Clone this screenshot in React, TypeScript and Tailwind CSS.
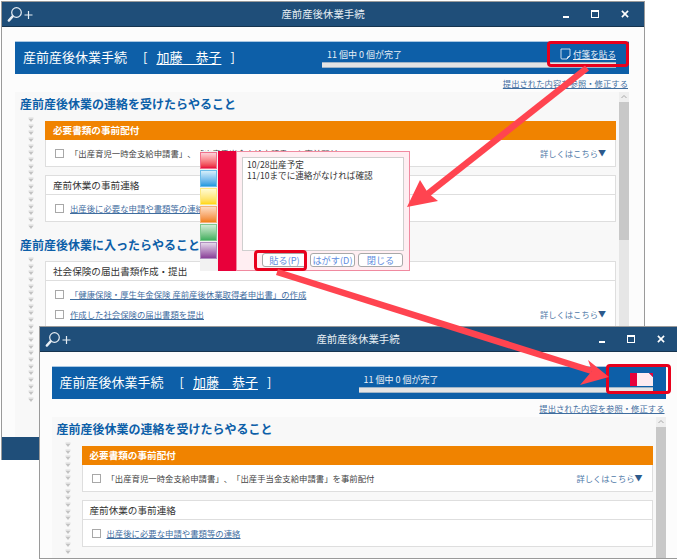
import React from "react";

const FONT = "font-['Noto_Sans_CJK_JP','Liberation_Sans',sans-serif]";

function Chevrons({ count }: { count: number }) {
  return (
    <div className="flex w-[30px] shrink-0 flex-col items-center pl-[2px]">
      {Array.from({ length: count }).map((_, i) => (
        <svg key={i} width="6" height="6.67" viewBox="0 0 6 6.67" className="block">
          <rect x="0.5" y="0.6" width="5" height="0.8" fill="#d6d6d6" />
          <path d="M0.5 1.8 H5.5 L3 5 Z" fill="#c2c2c2" />
        </svg>
      ))}
    </div>
  );
}

function Check() {
  return <span className="h-[9px] w-[9px] shrink-0 border border-[#a8a8a8] bg-white" />;
}

function Detail() {
  return (
    <span className="ml-auto flex items-center text-[8.3px] text-[#4f79a8]">
      詳しくはこちら<span className="text-[8px] text-[#2c5a8c]">▼</span>
    </span>
  );
}

function TitleBar({ front }: { front: boolean }) {
  return (
    <div className="relative flex h-[25px] shrink-0 items-center border-b border-[#16344f] bg-[#1f4e79] text-white">
      <svg width="28" height="18" viewBox="0 0 28 18" className="ml-[5px] mt-[2px]" fill="none" stroke="#e8eef4">
        <circle cx="9.5" cy="6.5" r="4.8" strokeWidth="1.2" />
        <path d="M5.6 10.4 L1.8 14.6" strokeWidth="2.4" strokeLinecap="round" />
        <path d="M17.5 9 H25.5 M21.5 5 V13" strokeWidth="1.2" />
      </svg>
      <span className={`absolute left-0 text-center text-[10.4px] text-[#e6edf3] ${front ? "right-[4px]" : "right-0"}`}>
        産前産後休業手続
      </span>
      <div className="ml-auto flex items-center gap-[22px] pr-[15px]">
        <span className="mt-[5px] h-[2px] w-[6px] bg-white" />
        <span className="h-[8px] w-[8px] border border-white border-t-2" />
        <svg width="8" height="8" viewBox="0 0 9 9" stroke="white" strokeWidth="1.8">
          <path d="M1 1 L8 8 M8 1 L1 8" />
        </svg>
      </div>
    </div>
  );
}

function Card({ children }: { children: React.ReactNode }) {
  return <div className="w-[571px] border border-[#dedede] bg-white">{children}</div>;
}

function CardHead({ children }: { children: React.ReactNode }) {
  return (
    <div className="flex h-[19px] items-center border-b border-[#dedede] pl-[7px] text-[9.6px] text-[#333]">{children}</div>
  );
}

function WindowContent({ pasted }: { pasted: boolean }) {
  return (
    <div className="flex min-h-0 flex-1 flex-col bg-[#fcfcfc] [text-spacing-trim:space-all]">
      <div className="mt-[14px] flex h-[33px] w-[614px] shrink-0 border-t border-[#a9c7e2] bg-[#0d5fa8] text-white">
        <div className="flex w-[307px] shrink-0 items-center pb-[3px] pl-[8px] text-[13px]">
          <span>産前産後休業手続</span>
          <span className="ml-[16px]">[</span>
          <span className="ml-[9px] underline underline-offset-2">加藤　恭子</span>
          <span className="ml-[9px]">]</span>
        </div>
        <div className="relative w-[294px] shrink-0">
          <div className="pl-[5px] pt-[7px] text-[9px] leading-[12px] text-[#e8eff6]">11 個中 0 個が完了</div>
          <div className="absolute left-0 right-0 top-[20px] h-[6px] border-y border-[#9fb4c8] bg-[#e4e4e4]" />
          {pasted ? (
            <svg className="absolute right-0 top-[6px]" width="23" height="13" viewBox="0 0 23 13">
              <rect x="0" y="0" width="7" height="13" fill="#e8003a" />
              <path d="M7 0 H19 L23 4 V13 H7 Z" fill="#fdebf0" />
              <path d="M19 0 H23 V4 Z" fill="#e8003a" />
            </svg>
          ) : (
            <div className="absolute right-0 top-[6px] flex items-center gap-[2px] text-[8.6px] leading-[12px] text-[#e8eff6]">
              <svg width="11" height="12" viewBox="0 0 11 12" fill="none" stroke="#dfe9f3" strokeWidth="0.9">
                <path d="M1 1 H10 V8 L7 11 H2 Q1 11 1 10 Z" />
                <path d="M7 11 Q7 8 10 8" />
              </svg>
              <span className="underline">付箋を貼る</span>
            </div>
          )}
        </div>
      </div>
      <div className="flex h-[18px] w-[614px] shrink-0 items-center justify-end pr-[1px] text-[8.35px] text-[#3f6d9f] underline">
        提出された内容を参照・修正する
      </div>
      <div className="flex min-h-0 w-[614px] flex-1 overflow-hidden bg-[#f8f8f8]">
        <div className="min-w-0 flex-1 pt-[3px]">
          <h2 className="pl-[5px] text-[12px] font-bold leading-[17px] text-[#0d5fa8]">産前産後休業の連絡を受けたらやること</h2>
          <div className="mt-[5px] flex">
            <Chevrons count={17} />
            <div className="flex flex-col gap-[8px] pt-[4px]">
              <div className="w-[571px] border border-[#dedede] bg-white">
                <div className="-mx-px -mt-px flex h-[19px] items-center bg-[#f08300] pl-[8px] text-[9.6px] font-bold text-[#fff]">
                  必要書類の事前配付
                </div>
                <div className="flex h-[26px] items-center pl-[9px] pr-[9px] text-[8.4px] text-[#444]">
                  <Check />
                  <span className="ml-[6px]">「出産育児一時金支給申請書」、「出産手当金支給申請書」を事前配付</span>
                  <Detail />
                </div>
              </div>
              <Card>
                <CardHead>産前休業の事前連絡</CardHead>
                <div className="flex h-[26px] items-center pl-[9px] text-[8.4px] text-[#3f6d9f]">
                  <Check />
                  <span className="ml-[6px] underline">出産後に必要な申請や書類等の連絡</span>
                </div>
              </Card>
            </div>
          </div>
          {!pasted && (
            <>
              <h2 className="mt-[6px] pl-[5px] text-[12px] font-bold leading-[17px] text-[#0d5fa8]">産前産後休業に入ったらやること</h2>
              <div className="mt-[4px] flex">
                <Chevrons count={22} />
                <div className="pt-[4px]">
                  <Card>
                    <CardHead>社会保険の届出書類作成・提出</CardHead>
                    <div className="flex flex-col gap-[10px] px-[9px] pb-[10px] pt-[8px] text-[8.4px] text-[#3f6d9f]">
                      <div className="flex h-[10px] items-center">
                        <Check />
                        <span className="ml-[6px] underline">「健康保険・厚生年金保険 産前産後休業取得者申出書」の作成</span>
                      </div>
                      <div className="flex h-[10px] items-center">
                        <Check />
                        <span className="ml-[6px] underline">作成した社会保険の届出書類を提出</span>
                        <Detail />
                      </div>
                    </div>
                  </Card>
                </div>
              </div>
            </>
          )}
        </div>
        <div className="ml-[3px] flex w-[10px] shrink-0 flex-col bg-[#efefef]">
          <svg width="10" height="10" viewBox="0 0 10 10" fill="none" stroke="#a8a8a8" strokeWidth="1" className="shrink-0">
            <path d="M2.5 6 L5 3.5 L7.5 6" />
          </svg>
          <div className="h-[138px] shrink-0 bg-[#c8c8c8]" />
          <div className="flex-1 bg-[#e6e6e6]" />
        </div>
      </div>
    </div>
  );
}

const SWATCHES = [
  "border-[#f0708c] from-[#fbd0d8] to-[#e8003a]",
  "border-[#6cbce8] from-[#d4eefa] to-[#1a9ae0]",
  "border-[#fde880] from-[#fffbd0] to-[#ffd800]",
  "border-[#f4b078] from-[#fcdcc0] to-[#f08010]",
  "border-[#80c890] from-[#d0ecd6] to-[#40b060]",
  "border-[#b090c0] from-[#e4d8ea] to-[#8a4098]",
];

function NoteDialog() {
  return (
    <div className="absolute left-[200px] top-[151px] z-10 flex h-[120px] w-[210px] text-[#333]">
      <div className="flex w-[18px] flex-col gap-px bg-[#f2f2f2] pr-px pt-px">
        {SWATCHES.map((s) => (
          <span key={s} className={`h-[17px] border bg-gradient-to-b ${s}`} />
        ))}
      </div>
      <div className="w-[18px] bg-[#e8003a]" />
      <div className="flex min-w-0 flex-1 flex-col border border-[#f08aa0] bg-[#ffeef2] px-[5px] pb-[3px] pt-[5px]">
        <div className="h-[95px] border border-[#cfcfcf] bg-white px-[4px] pt-[1px] text-[8.6px] leading-[11px] text-[#333]">
          <div>10/28出産予定</div>
          <div>11/10までに連絡がなければ確認</div>
        </div>
        <div className="mt-[2px] flex justify-end gap-[3px] pr-[1px]">
          {["貼る(P)", "はがす(D)", "閉じる"].map((t) => (
            <button
              key={t}
              className="h-[14px] w-[45px] rounded-[3px] border border-[#a8a8a8] bg-white text-center text-[9.2px] leading-[12px] text-[#5f8de0]"
            >
              {t}
            </button>
          ))}
        </div>
      </div>
    </div>
  );
}

export default function App() {
  return (
    <div className={`relative h-[559px] w-[677px] overflow-hidden bg-white ${FONT}`}>
      {/* back window */}
      <div className="absolute left-[1px] top-[1px] flex h-[459px] w-[644px] flex-col overflow-hidden border-x border-t border-[#9a9a9a] bg-[#fcfcfc] pl-[13px]">
        <div className="-ml-[13px] shrink-0">
          <TitleBar front={false} />
        </div>
        <WindowContent pasted={false} />
        <div className="-ml-[13px] h-[23px] shrink-0 bg-[#1f4e79]" />
      </div>
      <NoteDialog />
      {/* front window */}
      <div className="absolute left-[39px] top-[326px] z-20 flex h-[233px] w-[641px] flex-col overflow-hidden border border-r-0 border-[#9a9a9a] bg-[#fcfcfc] pl-[11.5px]">
        <div className="-ml-[11.5px] shrink-0">
          <TitleBar front />
        </div>
        <WindowContent pasted />
      </div>
      {/* callouts */}
      <div className="absolute left-[547px] top-[41px] z-30 h-[26px] w-[82px] rounded-[4px] border-[3px] border-[#e8001c]" />
      <div className="absolute left-[254px] top-[250px] z-30 h-[21px] w-[53px] rounded-[4px] border-[3px] border-[#e8001c]" />
      <div className="absolute left-[606px] top-[364px] z-30 h-[30px] w-[65px] rounded-[4px] border-[3px] border-[#e8001c]" />
      <svg className="pointer-events-none absolute left-0 top-0 z-30" width="677" height="559" viewBox="0 0 677 559">
        <path d="M587 68 L425 196" stroke="#ff4450" strokeWidth="6.5" />
        <path d="M407 207 L420 180 L428 193 L438 201 Z" fill="#ff4450" />
        <path d="M277 272 L592 371" stroke="#ff4450" strokeWidth="6.5" />
        <path d="M609 377 L588 360 L592 371 L580 385 Z" fill="#ff4450" />
      </svg>
    </div>
  );
}
